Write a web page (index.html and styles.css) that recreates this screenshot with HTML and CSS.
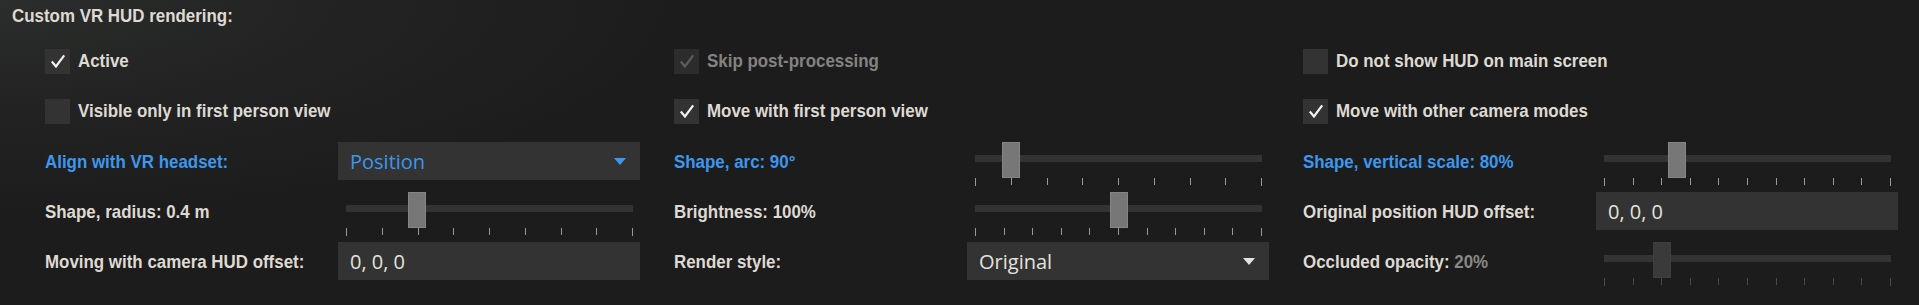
FILE: index.html
```html
<!DOCTYPE html>
<html>
<head>
<meta charset="utf-8">
<link rel="stylesheet" href="styles.css">
</head>
<body>
<div class="panel">
  <div class="title"><span class="t">Custom VR HUD rendering:</span></div>
  <div class="grid">
    <!-- row 1 -->
    <label class="check"><span class="box on"><svg viewBox="0 0 16 16"><polyline points="2.5,8.5 6.2,12.8 13.5,3"/></svg></span><span class="t">Active</span></label>
    <label class="check disabled"><span class="box on"><svg viewBox="0 0 16 16"><polyline points="2.5,8.5 6.2,12.8 13.5,3"/></svg></span><span class="t">Skip post-processing</span></label>
    <label class="check"><span class="box"></span><span class="t">Do not show HUD on main screen</span></label>
    <!-- row 2 -->
    <label class="check"><span class="box"></span><span class="t">Visible only in first person view</span></label>
    <label class="check"><span class="box on"><svg viewBox="0 0 16 16"><polyline points="2.5,8.5 6.2,12.8 13.5,3"/></svg></span><span class="t">Move with first person view</span></label>
    <label class="check"><span class="box on"><svg viewBox="0 0 16 16"><polyline points="2.5,8.5 6.2,12.8 13.5,3"/></svg></span><span class="t">Move with other camera modes</span></label>
    <!-- row 3 -->
    <div class="field">
      <div class="flabel accent"><span class="t">Align with VR headset:</span></div>
      <div class="select accent-sel"><span>Position</span><i class="arrow"></i></div>
    </div>
    <div class="field">
      <div class="flabel accent"><span class="t">Shape, arc: 90°</span></div>
      <div class="slider">
        <div class="track"><div class="thumb" style="left:12.6%"></div></div>
        <div class="ticks"><i></i><i></i><i></i><i></i><i></i><i></i><i></i><i></i><i></i></div>
      </div>
    </div>
    <div class="field">
      <div class="flabel accent"><span class="t">Shape, vertical scale: 80%</span></div>
      <div class="slider">
        <div class="track"><div class="thumb" style="left:25.5%"></div></div>
        <div class="ticks"><i></i><i></i><i></i><i></i><i></i><i></i><i></i><i></i><i></i><i></i><i></i></div>
      </div>
    </div>
    <!-- row 4 -->
    <div class="field">
      <div class="flabel"><span class="t">Shape, radius: 0.4 m</span></div>
      <div class="slider">
        <div class="track"><div class="thumb" style="left:24.8%"></div></div>
        <div class="ticks"><i></i><i></i><i></i><i></i><i></i><i></i><i></i><i></i><i></i></div>
      </div>
    </div>
    <div class="field">
      <div class="flabel"><span class="t">Brightness: 100%</span></div>
      <div class="slider">
        <div class="track"><div class="thumb" style="left:50%"></div></div>
        <div class="ticks"><i></i><i></i><i></i><i></i><i></i><i></i><i></i><i></i><i></i><i></i><i></i></div>
      </div>
    </div>
    <div class="field">
      <div class="flabel"><span class="t">Original position HUD offset:</span></div>
      <div class="input">0, 0, 0</div>
    </div>
    <!-- row 5 -->
    <div class="field">
      <div class="flabel"><span class="t">Moving with camera HUD offset:</span></div>
      <div class="input">0, 0, 0</div>
    </div>
    <div class="field">
      <div class="flabel"><span class="t">Render style:</span></div>
      <div class="select"><span>Original</span><i class="arrow"></i></div>
    </div>
    <div class="field">
      <div class="flabel"><span class="t">Occluded opacity: <span class="dim">20%</span></span></div>
      <div class="slider disabled">
        <div class="track"><div class="thumb" style="left:20.3%"></div></div>
        <div class="ticks"><i></i><i></i><i></i><i></i><i></i><i></i><i></i><i></i><i></i><i></i><i></i></div>
      </div>
    </div>
  </div>
</div>
</body>
</html>
```

FILE: styles.css
```css
html, body {
  margin: 0;
  padding: 0;
  height: 100%;
}
body {
  background: #1c1c1c;
  overflow: hidden;
}
.panel {
  height: 305px;
  box-sizing: border-box;
  padding: 4px 0 0 12px;
  background: radial-gradient(ellipse 700px 220px at 0 0, #2b2e2c 0%, #222322 45%, #1c1c1c 100%);
  font-family: "Liberation Sans Narrow", "Arial Narrow", "Liberation Sans", sans-serif;
  font-weight: bold;
  font-size: 19px;
  color: #dedad3;
}
.t {
  display: inline-block;
  white-space: nowrap;
  transform: scaleX(0.89);
  transform-origin: 0 50%;
}
.title {
  height: 24px;
  line-height: 24px;
}
.grid {
  margin-top: 14px;
  margin-left: 33px;
  display: grid;
  grid-template-columns: repeat(3, 595px);
  grid-auto-rows: 38px;
  column-gap: 34px;
  row-gap: 12px;
}
.check {
  display: flex;
  align-items: center;
  gap: 8px;
}
.box {
  width: 25px;
  height: 25px;
  flex: none;
  background: #333333;
  display: flex;
  align-items: center;
  justify-content: center;
}
.box svg {
  width: 18px;
  height: 18px;
  fill: none;
  stroke: #f2f2f2;
  stroke-width: 2;
}
.check.disabled .t {
  color: #858380;
}
.check.disabled .box {
  background: #2c2c2c;
}
.check.disabled .box svg {
  stroke: #5c5c5c;
}
.field {
  display: flex;
  align-items: flex-start;
}
.flabel {
  width: 293px;
  height: 38px;
  line-height: 40px;
  flex: none;
}
.accent {
  color: #3d97ec;
}
.dim {
  color: #8a8886;
}
.select, .input {
  width: 302px;
  height: 38px;
  box-sizing: border-box;
  background: #333333;
  display: flex;
  align-items: center;
  padding: 1px 12px 0;
  font-family: "Open Sans", "Noto Sans", sans-serif;
  font-weight: normal;
  font-size: 20px;
  color: #e4e2de;
}
.select span {
  flex: 1;
}
.accent-sel {
  color: #3d97ec;
}
.arrow {
  width: 0;
  height: 0;
  border-left: 6px solid transparent;
  border-right: 6px solid transparent;
  border-top: 7px solid #e4e2de;
  margin-right: 2px;
}
.accent-sel .arrow {
  border-top-color: #3d97ec;
}
.slider {
  width: 302px;
  height: 38px;
  box-sizing: border-box;
  padding: 0 7px 0 8px;
  position: relative;
}
.track {
  position: relative;
  margin-top: 13px;
  height: 7px;
  background: #333333;
}
.thumb {
  position: absolute;
  top: -13px;
  width: 18px;
  height: 36px;
  margin-left: -9px;
  box-sizing: border-box;
  background: #777777;
  border: 1px solid #858585;
}
.ticks {
  display: flex;
  justify-content: space-between;
  margin-top: 16px;
}
.ticks i {
  display: block;
  width: 1px;
  height: 7px;
  background: #9a9a9a;
}
.ticks i:first-child, .ticks i:last-child {
  height: 8px;
}
.slider.disabled .thumb {
  background: #3a3a3a;
  border-color: #3e3e3e;
}
.slider.disabled .ticks i {
  background: #4a4a4a;
}
```
